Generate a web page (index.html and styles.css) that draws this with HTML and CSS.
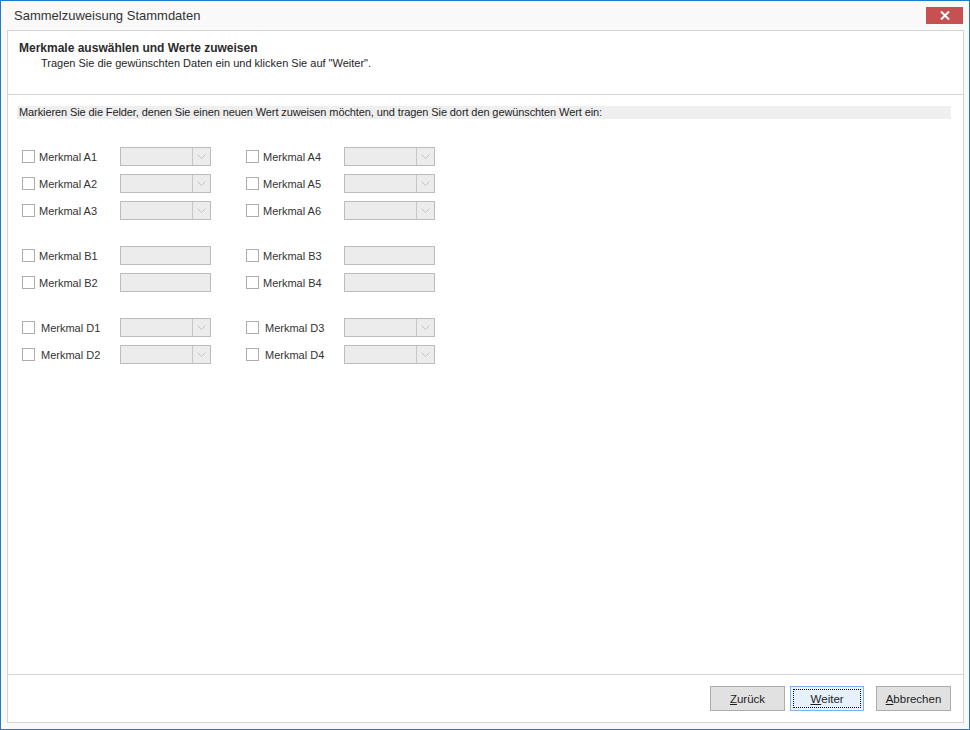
FILE: index.html
```html
<!DOCTYPE html>
<html lang="de">
<head>
<meta charset="utf-8">
<title>Sammelzuweisung Stammdaten</title>
<link rel="stylesheet" href="styles.css">
</head>
<body>
<div class="window">
  <div class="titlebar">
    <span class="title">Sammelzuweisung Stammdaten</span>
    <button class="close" aria-label="Schließen">
      <svg width="10" height="9" viewBox="0 0 10 9"><path d="M1 0.5 L9 8.5 M9 0.5 L1 8.5" stroke="#fff" stroke-width="2" fill="none"/></svg>
    </button>
  </div>
  <div class="panel">
    <div class="header">
      <div class="h-title">Merkmale auswählen und Werte zuweisen</div>
      <div class="h-sub">Tragen Sie die gewünschten Daten ein und klicken Sie auf "Weiter".</div>
    </div>
    <div class="content">
      <div class="hint">Markieren Sie die Felder, denen Sie einen neuen Wert zuweisen möchten, und tragen Sie dort den gewünschten Wert ein:</div>

      <div class="group">
        <div class="row">
          <label class="field"><span class="cb"></span><span class="lbl">Merkmal A1</span></label>
          <div class="combo"><span class="btn"><svg width="9" height="5" viewBox="0 0 9 5"><path d="M0.5 0.5 L4.5 4.5 L8.5 0.5" stroke="#c4c4c4" fill="none"/></svg></span></div>
          <label class="field col2"><span class="cb"></span><span class="lbl">Merkmal A4</span></label>
          <div class="combo"><span class="btn"><svg width="9" height="5" viewBox="0 0 9 5"><path d="M0.5 0.5 L4.5 4.5 L8.5 0.5" stroke="#c4c4c4" fill="none"/></svg></span></div>
        </div>
        <div class="row">
          <label class="field"><span class="cb"></span><span class="lbl">Merkmal A2</span></label>
          <div class="combo"><span class="btn"><svg width="9" height="5" viewBox="0 0 9 5"><path d="M0.5 0.5 L4.5 4.5 L8.5 0.5" stroke="#c4c4c4" fill="none"/></svg></span></div>
          <label class="field col2"><span class="cb"></span><span class="lbl">Merkmal A5</span></label>
          <div class="combo"><span class="btn"><svg width="9" height="5" viewBox="0 0 9 5"><path d="M0.5 0.5 L4.5 4.5 L8.5 0.5" stroke="#c4c4c4" fill="none"/></svg></span></div>
        </div>
        <div class="row">
          <label class="field"><span class="cb"></span><span class="lbl">Merkmal A3</span></label>
          <div class="combo"><span class="btn"><svg width="9" height="5" viewBox="0 0 9 5"><path d="M0.5 0.5 L4.5 4.5 L8.5 0.5" stroke="#c4c4c4" fill="none"/></svg></span></div>
          <label class="field col2"><span class="cb"></span><span class="lbl">Merkmal A6</span></label>
          <div class="combo"><span class="btn"><svg width="9" height="5" viewBox="0 0 9 5"><path d="M0.5 0.5 L4.5 4.5 L8.5 0.5" stroke="#c4c4c4" fill="none"/></svg></span></div>
        </div>
      </div>

      <div class="group">
        <div class="row">
          <label class="field"><span class="cb"></span><span class="lbl">Merkmal B1</span></label>
          <div class="textbox"></div>
          <label class="field col2"><span class="cb"></span><span class="lbl">Merkmal B3</span></label>
          <div class="textbox"></div>
        </div>
        <div class="row">
          <label class="field"><span class="cb"></span><span class="lbl">Merkmal B2</span></label>
          <div class="textbox"></div>
          <label class="field col2"><span class="cb"></span><span class="lbl">Merkmal B4</span></label>
          <div class="textbox"></div>
        </div>
      </div>

      <div class="group">
        <div class="row">
          <label class="field wide"><span class="cb"></span><span class="lbl">Merkmal D1</span></label>
          <div class="combo"><span class="btn"><svg width="9" height="5" viewBox="0 0 9 5"><path d="M0.5 0.5 L4.5 4.5 L8.5 0.5" stroke="#c4c4c4" fill="none"/></svg></span></div>
          <label class="field wide col2"><span class="cb"></span><span class="lbl">Merkmal D3</span></label>
          <div class="combo"><span class="btn"><svg width="9" height="5" viewBox="0 0 9 5"><path d="M0.5 0.5 L4.5 4.5 L8.5 0.5" stroke="#c4c4c4" fill="none"/></svg></span></div>
        </div>
        <div class="row">
          <label class="field wide"><span class="cb"></span><span class="lbl">Merkmal D2</span></label>
          <div class="combo"><span class="btn"><svg width="9" height="5" viewBox="0 0 9 5"><path d="M0.5 0.5 L4.5 4.5 L8.5 0.5" stroke="#c4c4c4" fill="none"/></svg></span></div>
          <label class="field wide col2"><span class="cb"></span><span class="lbl">Merkmal D4</span></label>
          <div class="combo"><span class="btn"><svg width="9" height="5" viewBox="0 0 9 5"><path d="M0.5 0.5 L4.5 4.5 L8.5 0.5" stroke="#c4c4c4" fill="none"/></svg></span></div>
        </div>
      </div>
    </div>
    <div class="footer">
      <button class="pbtn"><u>Z</u>urück</button>
      <button class="pbtn default"><span class="focus"><u>W</u>eiter</span></button>
      <button class="pbtn cancel"><u>A</u>bbrechen</button>
    </div>
  </div>
</div>
</body>
</html>
```

FILE: styles.css
```css
* { box-sizing: border-box; }
html, body { margin: 0; padding: 0; background: #ffffff; }
body {
  font-family: "Liberation Sans", Arial, sans-serif;
  font-size: 11px;
  color: #1e1e1e;
}
.window {
  width: 970px;
  height: 730px;
  border: 1px solid #1c7ad0;
  background: #f9f9f9;
  display: flex;
  flex-direction: column;
}
.titlebar {
  height: 29px;
  flex: 0 0 29px;
  display: flex;
  align-items: flex-start;
  justify-content: space-between;
  padding-left: 13px;
}
.title {
  font-size: 13px;
  color: #333333;
  margin-top: 7px;
}
.close {
  width: 37px;
  height: 17px;
  margin-top: 6px;
  margin-right: 6px;
  border: none;
  padding: 0;
  background: #c75050;
  display: flex;
  align-items: center;
  justify-content: center;
}
.panel {
  flex: 1;
  margin: 0 5px 6px 6px;
  border: 1px solid #d5d5d5;
  background: #ffffff;
  display: flex;
  flex-direction: column;
}
.header {
  height: 64px;
  flex: 0 0 64px;
  border-bottom: 1px solid #d5d5d5;
  padding: 10px 0 0 11px;
}
.h-title {
  font-weight: bold;
  font-size: 12px;
  color: #2b2b2b;
  line-height: 15px;
}
.h-sub {
  padding-left: 22px;
  font-size: 11px;
  line-height: 15px;
  color: #1e1e1e;
}
.content {
  flex: 1;
  padding: 11px 12px 0 9px;
}
.hint {
  background: #efefef;
  height: 13px;
  line-height: 13px;
  padding-left: 2px;
  font-size: 11px;
  letter-spacing: -0.1px;
  white-space: nowrap;
  overflow: hidden;
  margin-bottom: 28px;
}
.group {
  display: flex;
  flex-direction: column;
  gap: 8px;
  margin-bottom: 26px;
}
.row {
  display: flex;
  align-items: center;
  height: 19px;
  padding-left: 5px;
}
.field {
  width: 98px;
  display: flex;
  align-items: center;
  color: #333333;
}
.field.col2 { margin-left: 35px; }
.cb {
  width: 13px;
  height: 13px;
  border: 1px solid #adadad;
  background: #ffffff;
  flex: 0 0 13px;
}
.lbl { margin-left: 4px; white-space: nowrap; }
.field.wide .lbl { margin-left: 6px; }
.combo, .textbox {
  width: 91px;
  height: 19px;
  border: 1px solid #bcbcbc;
  background: #ececec;
  display: flex;
  justify-content: flex-end;
}
.combo .btn {
  width: 18px;
  height: 100%;
  border-left: 1px solid #c6c6c6;
  display: flex;
  align-items: center;
  justify-content: center;
}
.footer {
  height: 48px;
  flex: 0 0 48px;
  border-top: 1px solid #d5d5d5;
  display: flex;
  justify-content: flex-end;
  align-items: flex-start;
  padding: 11px 12px 0 0;
}
.pbtn {
  width: 75px;
  height: 25px;
  border: 1px solid #adadad;
  background: #e1e1e1;
  font-family: "Liberation Sans", Arial, sans-serif;
  font-size: 11.5px;
  color: #1e1e1e;
  padding: 0;
  display: flex;
  align-items: center;
  justify-content: center;
}
.pbtn.default {
  width: 74px;
  margin-left: 5px;
  border-color: #7eb4ea;
  background: #e5f1fb;
  padding: 2px;
}
.pbtn .focus {
  width: 100%;
  height: 100%;
  border: 1px dotted #000000;
  display: flex;
  align-items: center;
  justify-content: center;
}
.pbtn.cancel { margin-left: 12px; }
u { text-decoration: underline; }
```
